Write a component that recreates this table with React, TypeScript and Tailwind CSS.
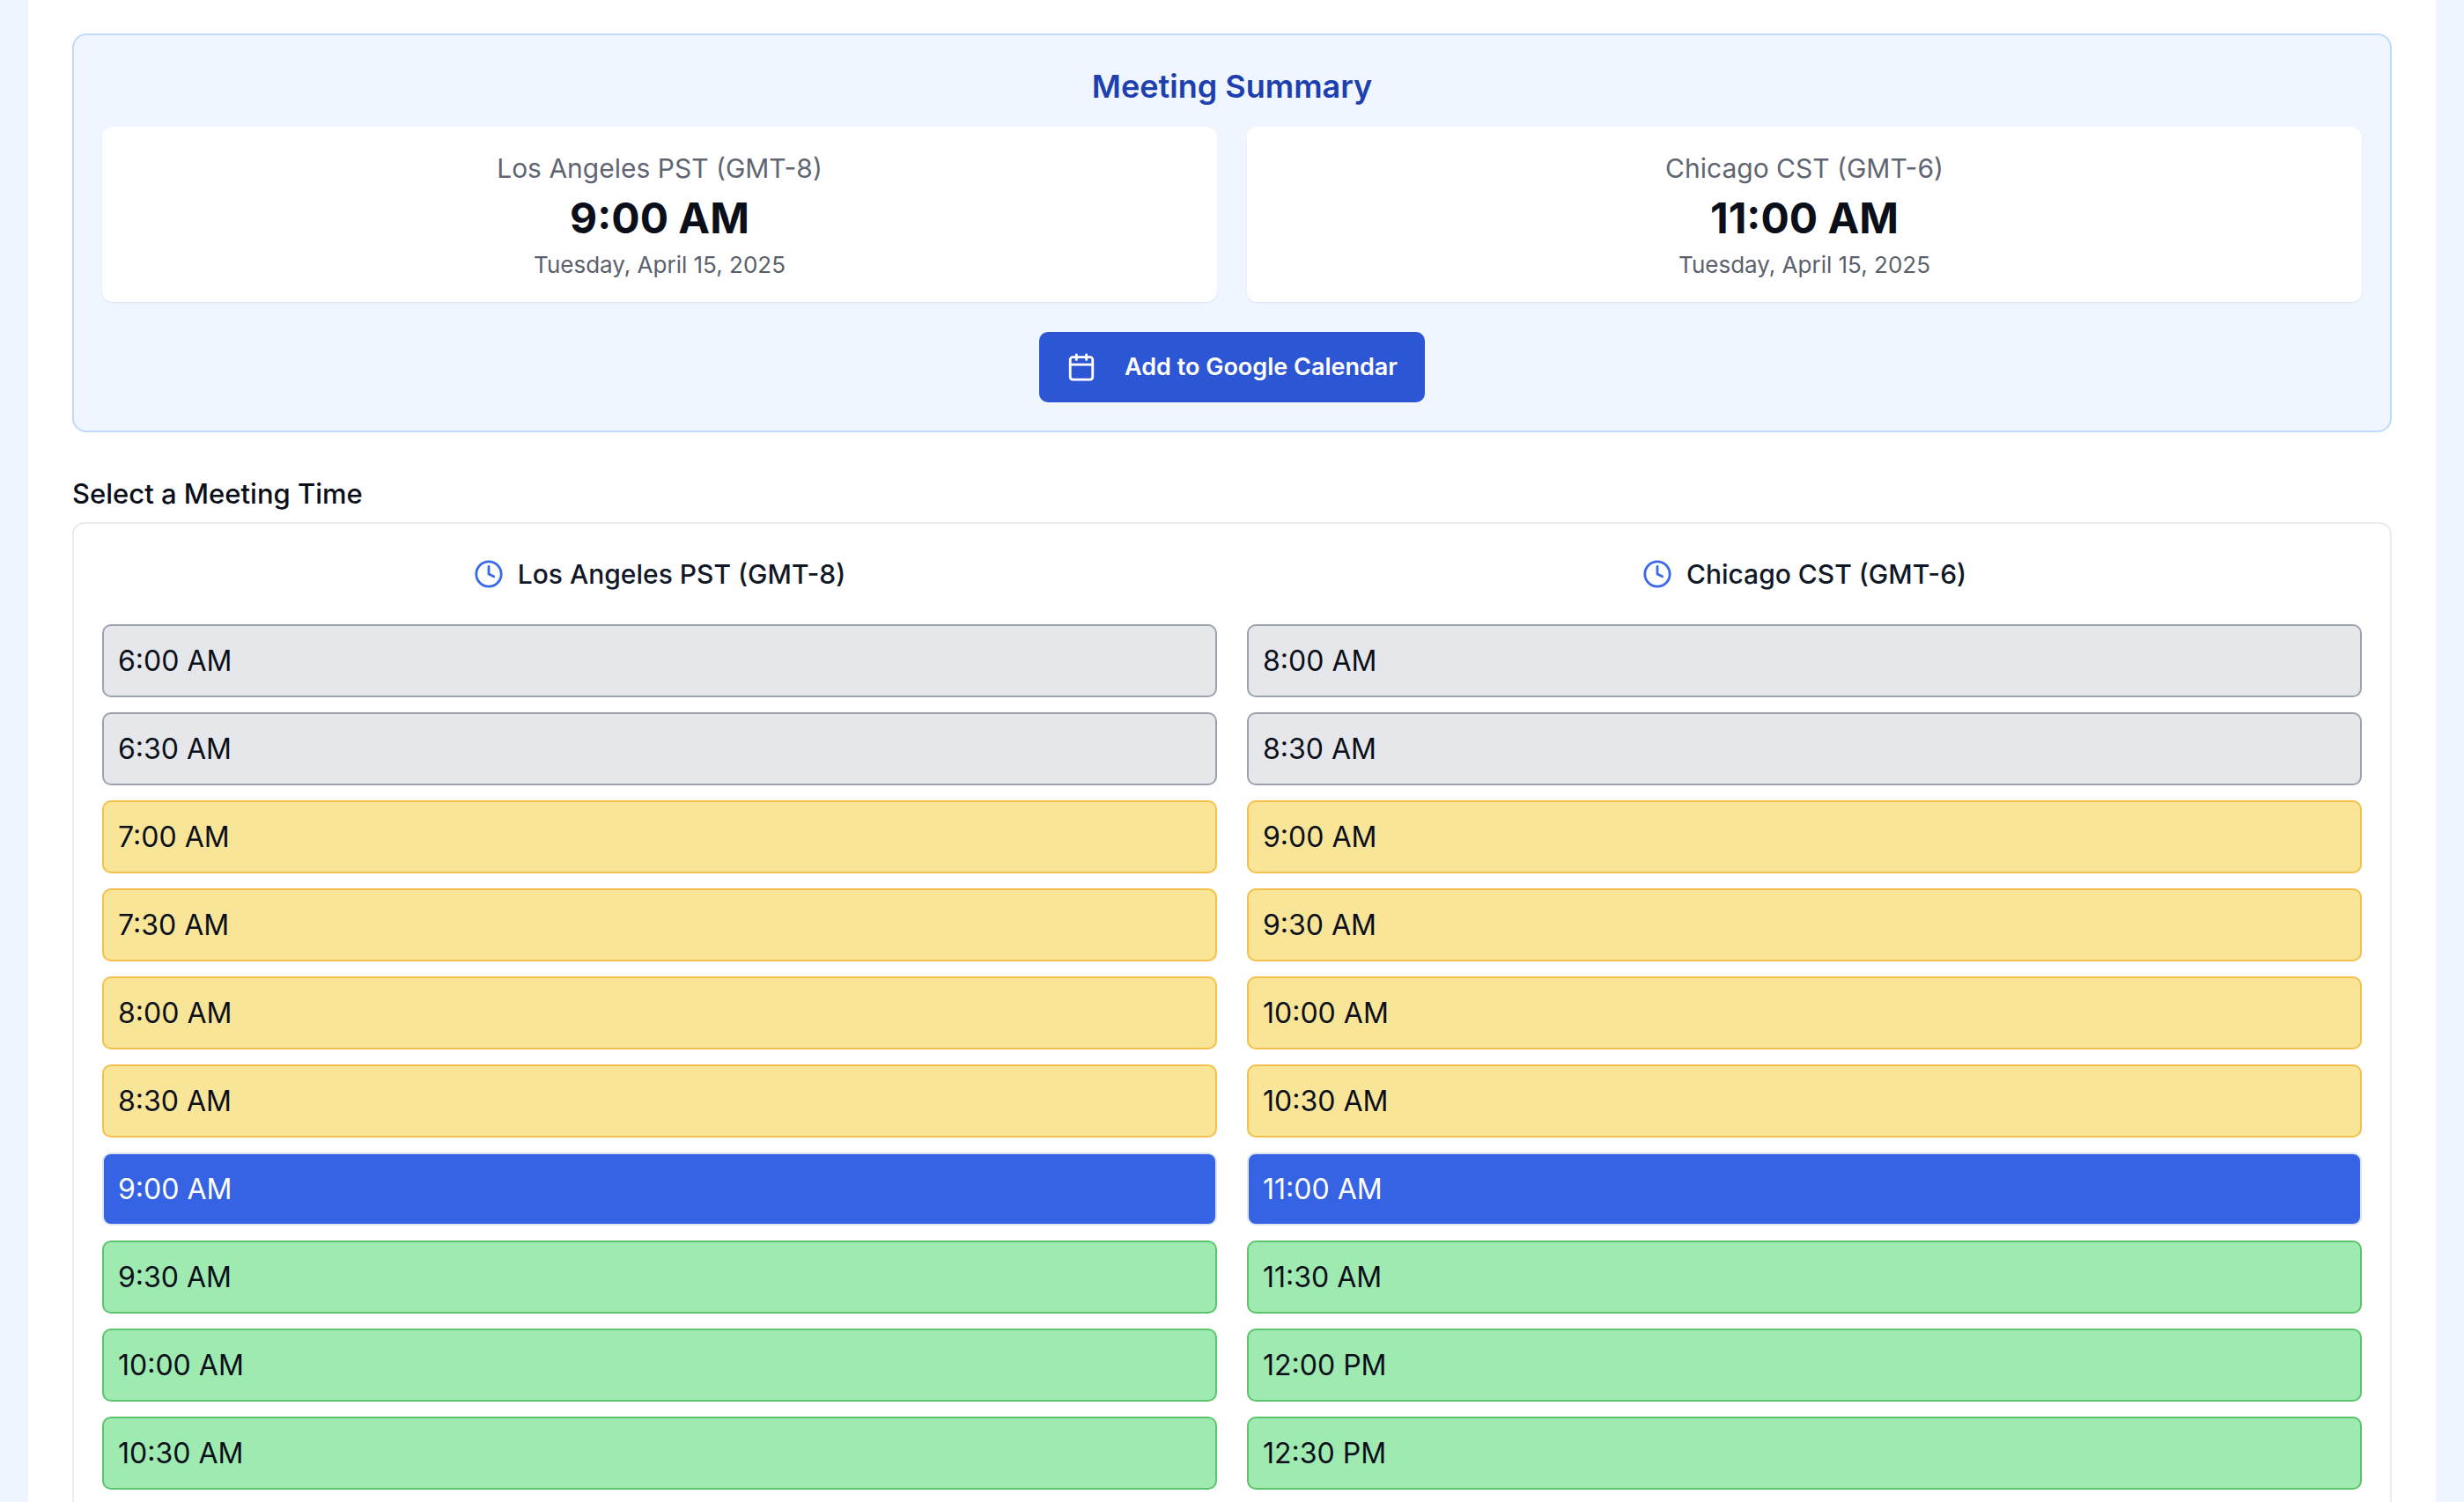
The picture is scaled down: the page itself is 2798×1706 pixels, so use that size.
import { Calendar, Clock } from "lucide-react";

type SlotKind = "off" | "edge" | "selected" | "good";

interface Slot {
  local: string;
  remote: string;
  kind: SlotKind;
}

const slots: Slot[] = [
  { local: "6:00 AM", remote: "8:00 AM", kind: "off" },
  { local: "6:30 AM", remote: "8:30 AM", kind: "off" },
  { local: "7:00 AM", remote: "9:00 AM", kind: "edge" },
  { local: "7:30 AM", remote: "9:30 AM", kind: "edge" },
  { local: "8:00 AM", remote: "10:00 AM", kind: "edge" },
  { local: "8:30 AM", remote: "10:30 AM", kind: "edge" },
  { local: "9:00 AM", remote: "11:00 AM", kind: "selected" },
  { local: "9:30 AM", remote: "11:30 AM", kind: "good" },
  { local: "10:00 AM", remote: "12:00 PM", kind: "good" },
  { local: "10:30 AM", remote: "12:30 PM", kind: "good" },
];

const slotStyles: Record<SlotKind, string> = {
  off: "bg-[#e5e7eb] border-[#9ca3af] text-[#0b0f19]",
  edge: "bg-[#f9e598] border-[#f3c14b] text-[#0b0f19]",
  selected: "bg-[#3563e3] border-[#dde4ef] text-white",
  good: "bg-[#9eeab1] border-[#5cc46c] text-[#0b0f19]",
};

function SummaryCard({ zone, time }: { zone: string; time: string }) {
  return (
    <div className="bg-white rounded-[12px] shadow-[0_1px_2px_rgba(15,23,42,0.08)] flex flex-col items-center pt-[27px] pb-[24px]">
      <p className="text-[30px] leading-[40px] text-[#5f6672]">{zone}</p>
      <p className="text-[48px] leading-[60px] font-bold text-[#0b0f19] mt-[7px]">{time}</p>
      <p className="text-[26px] leading-[36px] text-[#5a616c] mt-[5px]">Tuesday, April 15, 2025</p>
    </div>
  );
}

function SlotColumn({ zone, times }: { zone: string; times: { label: string; kind: SlotKind }[] }) {
  return (
    <div className="flex flex-col">
      <div className="flex items-center justify-center gap-[16px] h-[44px] mb-[35px]">
        <Clock size={34} strokeWidth={2} className="text-[#3b6ae8]" />
        <span className="text-[30px] font-medium text-[#111827]">{zone}</span>
      </div>
      <div className="flex flex-col gap-[17px]">
        {times.map((t) => (
          <button
            key={t.label}
            className={`h-[83px] w-full rounded-[10px] border-2 pl-[16px] text-left text-[32px] ${slotStyles[t.kind]}`}
          >
            {t.label}
          </button>
        ))}
      </div>
    </div>
  );
}

export default function App() {
  return (
    <div className="min-h-screen bg-[#eef4fd] px-[32px] font-['Inter','Noto_Sans',sans-serif]">
      <div className="min-h-screen bg-white px-[50px] pt-[38px]">
        {/* Summary */}
        <section className="rounded-[16px] border-2 border-[#c3d9fb] bg-[#eff6ff] px-[32px] pt-[32px] pb-[32px]">
          <h2 className="text-center text-[36px] leading-[52px] font-semibold text-[#1e40af] mb-[20px]">
            Meeting Summary
          </h2>
          <div className="grid grid-cols-2 gap-[34px]">
            <SummaryCard zone="Los Angeles PST (GMT-8)" time="9:00 AM" />
            <SummaryCard zone="Chicago CST (GMT-6)" time="11:00 AM" />
          </div>
          <div className="flex justify-center mt-[34px]">
            <button className="flex items-center h-[80px] px-[31px] rounded-[10px] bg-[#2d56d4] text-white">
              <Calendar size={34} strokeWidth={2} />
              <span className="ml-[32px] text-[27px] font-semibold">Add to Google Calendar</span>
            </button>
          </div>
        </section>

        {/* Picker */}
        <h3 className="mt-[50px] text-[31px] leading-[40px] font-medium text-[#0b0f19] mb-[12px]">
          Select a Meeting Time
        </h3>
        <section className="rounded-[14px] border-2 border-[#e8ebf0] bg-white px-[32px] pt-[35px] pb-[40px]">
          <div className="grid grid-cols-2 gap-[34px]">
            <SlotColumn
              zone="Los Angeles PST (GMT-8)"
              times={slots.map((s) => ({ label: s.local, kind: s.kind }))}
            />
            <SlotColumn
              zone="Chicago CST (GMT-6)"
              times={slots.map((s) => ({ label: s.remote, kind: s.kind }))}
            />
          </div>
        </section>
      </div>
    </div>
  );
}
